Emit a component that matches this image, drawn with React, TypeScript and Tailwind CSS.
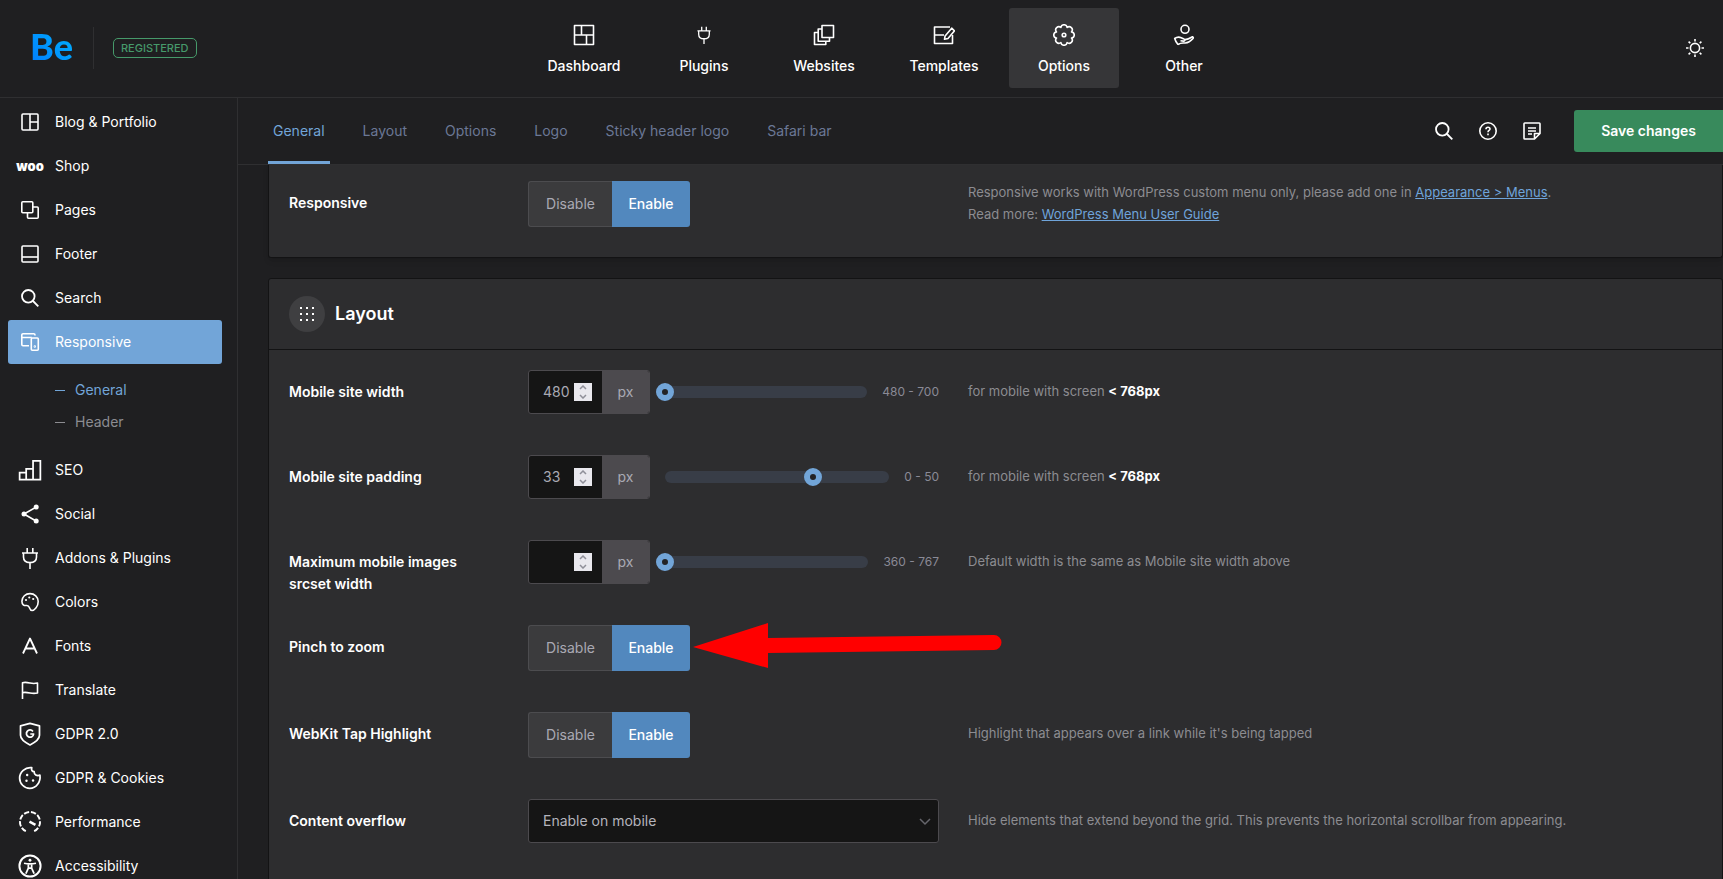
import { useState, type ReactNode } from 'react';

function Icon({ size = 22, children }: { size?: number; children: ReactNode }) {
  return (
    <svg
      width={size}
      height={size}
      viewBox="0 0 22 22"
      fill="none"
      stroke="currentColor"
      strokeWidth="1.6"
      strokeLinejoin="round"
      aria-hidden="true"
    >
      {children}
    </svg>
  );
}

const PlugPaths = () => (
  <>
    <path d="M8.2 1v5M13.8 1v5M3 6h16" />
    <path d="M4.5 6v4c0 3.6 2.6 5.6 6.5 5.6s6.5-2 6.5-5.6V6M11 15.6V22" />
  </>
);

const icons = {
  blog: (
    <Icon>
      <rect x="3" y="3" width="16" height="16" rx="1" />
      <path d="M11 3v16M11 11h8" />
    </Icon>
  ),
  pages: (
    <Icon>
      <rect x="2.8" y="2.8" width="11" height="11" rx="1" />
      <path d="M14 8h4.2a1 1 0 0 1 1 1v9.2a1 1 0 0 1-1 1H9.5a1 1 0 0 1-1-1V14" />
    </Icon>
  ),
  footer: (
    <Icon>
      <rect x="3" y="3" width="16" height="16" rx="1" />
      <path d="M3 14h16" />
    </Icon>
  ),
  search: (
    <Icon>
      <circle cx="9.3" cy="9.3" r="6.3" strokeWidth="1.8" />
      <path d="m14 14 5.3 5.3" strokeWidth="1.8" />
    </Icon>
  ),
  responsive: (
    <Icon>
      <path d="M16 4.5V4a1.2 1.2 0 0 0-1.2-1.2H4A1.2 1.2 0 0 0 2.8 4v9.5c0 .7.5 1.2 1.2 1.2h6M2.8 6.5h10" />
      <rect x="12.3" y="7" width="7" height="12.3" rx="1" />
      <circle cx="15.8" cy="15.5" r=".4" />
    </Icon>
  ),
  seo: (
    <Icon size={24}>
      <path
        d="M1.5 13.5h6v6.3h-6zM7.5 10h6.3v9.800H7.500zM13.800 2.600h6.700v17.200h-6.700z"
        strokeLinejoin="miter"
      />
    </Icon>
  ),
  social: (
    <Icon>
      <path d="M17 4.2 5 11l12 7" />
      <g fill="currentColor" stroke="none">
        <circle cx="5" cy="11" r="2.5" />
        <circle cx="17.2" cy="4" r="2.5" />
        <circle cx="17.2" cy="18" r="2.5" />
      </g>
    </Icon>
  ),
  plug: (
    <Icon>
      <PlugPaths />
    </Icon>
  ),
  colors: (
    <Icon>
      <path d="M2.9 10.2C3 5.8 6.6 2.6 11 2.6s8.2 3.3 8.2 8c0 2.6-.8 4.6-2.1 6.1-1.2 1.5-2.6 2.8-4 2.8-1.7 0-2.1-1.3-2.6-2.7-.5-1.3-1-2.3-2.6-2.3-1.2 0-2.5.3-3.6-.7-1-.9-1.4-2.2-1.4-3.6z" />
      <g fill="currentColor" stroke="none">
        <circle cx="7" cy="9" r="1.1" />
        <circle cx="10.3" cy="6.5" r="1.1" />
        <circle cx="14.2" cy="8" r="1.1" />
      </g>
    </Icon>
  ),
  fonts: (
    <Icon>
      <path d="m4 18.5 7-15 7 15M6.5 13.5h9" strokeWidth="1.8" />
    </Icon>
  ),
  flag: (
    <Icon>
      <path d="M3.5 20V3.8c2.5-1 4.500-.5 7.500.2s5 .6 7.500 0v10c-2.500.6-4.500.6-7.500 0s-5-1-7.500-.3" />
    </Icon>
  ),
  shield: (
    <Icon size={24}>
      <path d="M2.3 3.600 11 1.200l8.700 2.400v8.600c0 4-4.200 6.600-8.700 8.800-4.500-2.200-8.700-4.800-8.700-8.800z" />
      <path d="M13.700 8.700A3.300 3.300 0 1 0 14.300 11h-3" />
    </Icon>
  ),
  cookie: (
    <Icon size={24}>
      <path d="M12.6 1.5c-.6 2.1.3 3.5 2.2 3.7-.2 2.6 2.4 4.2 5.3 3.2.9 6.2-3.3 12.1-9.3 12.1A9.5 9.5 0 0 1 1.500 11c0-5.400 5-10.300 11.100-9.500z" />
      <g fill="currentColor" stroke="none">
        <circle cx="8.400" cy="8.300" r="1.1" />
        <circle cx="7.800" cy="13.500" r="1.1" />
        <circle cx="13.800" cy="13.300" r="1.1" />
      </g>
    </Icon>
  ),
  performance: (
    <Icon size={24}>
      <path d="M7.2 19.4a9.2 9.2 0 1 1 7.6 0" strokeDasharray="4.800 1.600" strokeWidth="1.8" />
      <path d="m10.500 10.700 5.500 3" strokeWidth="2.3" />
    </Icon>
  ),
  accessibility: (
    <Icon size={24}>
      <circle cx="11" cy="11" r="9.700" strokeWidth="1.8" />
      <circle cx="11" cy="5.700" r="1.300" fill="currentColor" stroke="none" />
      <path d="M5.500 8.500c3.500.8 7.500.8 11 0M9.500 9v4l-2.300 5M12.500 9v4l2.300 5M9.500 13h3" />
    </Icon>
  ),
  dashboard: (
    <Icon>
      <path d="M1.500 1.500h19v19h-19zM1.500 11h19M8.500 1.500V11M13.500 11v9.500" />
    </Icon>
  ),
  websites: (
    <Icon>
      <path d="M9 1.500h11.500v12H9z" />
      <path d="M9 5H5.200v12.200h11.300v-3.700M5.200 8.500H1.500v12h11.300v-3.300" />
    </Icon>
  ),
  templates: (
    <Icon>
      <path d="M17 3H1.500v16.500H19.500V11M1.500 11H11" />
      <path d="m18.700 4.200 2.800 2.600-6.500 7.700-3.500.8.6-3.400z" />
    </Icon>
  ),
  gear: (
    <Icon>
      <path d="M18.500 7.900a3.120 3.120 0 0 1 0 6.200a3.120 3.120 0 0 1-4.400 4.400a3.120 3.120 0 0 1-6.200 0a3.120 3.120 0 0 1-4.400-4.400a3.120 3.120 0 0 1 0-6.200a3.120 3.120 0 0 1 4.400-4.400a3.120 3.120 0 0 1 6.200 0a3.120 3.120 0 0 1 4.400 4.400z" />
      <circle cx="11" cy="11" r="1.800" />
    </Icon>
  ),
  other: (
    <Icon>
      <circle cx="12" cy="5.300" r="4" />
      <path d="M5 20.500c-1.500-2-2.800-3.800-3.300-6 2-1.500 4.300-1.800 6.500-.8l2.800 1.200c1.500.6 1.200 2.300-.5 2.200l-3-.3M12 15.500c2.500 0 4.800-1.200 7.500-2.800 1 .5 1 1.300.3 2-2.300 2.600-4.300 4-7.500 4.300-2.300.2-4.500-.5-7.300 1.500" />
    </Icon>
  ),
};

const topNav = [
  { label: 'Dashboard', icon: icons.dashboard },
  {
    label: 'Plugins',
    icon: (
      <Icon size={18}>
        <PlugPaths />
      </Icon>
    ),
  },
  { label: 'Websites', icon: icons.websites },
  { label: 'Templates', icon: icons.templates },
  { label: 'Options', icon: icons.gear },
  { label: 'Other', icon: icons.other },
];

const sideNav = [
  { label: 'Blog & Portfolio', icon: icons.blog },
  { label: 'Shop', icon: <span className="text-[13px] leading-[18px] font-black">woo</span> },
  { label: 'Pages', icon: icons.pages },
  { label: 'Footer', icon: icons.footer },
  { label: 'Search', icon: icons.search },
  { label: 'Responsive', icon: icons.responsive, children: ['General', 'Header'] },
  { label: 'SEO', icon: icons.seo },
  { label: 'Social', icon: icons.social },
  { label: 'Addons & Plugins', icon: icons.plug },
  { label: 'Colors', icon: icons.colors },
  { label: 'Fonts', icon: icons.fonts },
  { label: 'Translate', icon: icons.flag },
  { label: 'GDPR 2.0', icon: icons.shield },
  { label: 'GDPR & Cookies', icon: icons.cookie },
  { label: 'Performance', icon: icons.performance },
  { label: 'Accessibility', icon: icons.accessibility },
];

const tabs = ['General', 'Layout', 'Options', 'Logo', 'Sticky header logo', 'Safari bar'];

function Header() {
  return (
    <header className="flex h-[98px] shrink-0 items-center border-b border-[#2f2f31] pb-px">
      <div className="flex w-[237px] items-center pl-[30px]">
        <a
          href="#"
          className="bg-linear-to-tr from-[#0077ff] to-[#08b4fb] bg-clip-text pb-1 font-['Lato'] text-[36px] leading-[42px] font-black text-transparent"
        >
          Be
        </a>
        <span className="ml-5 h-[42px] w-px bg-[#2f2f31]" />
        <span className="ml-[19px] rounded-[5px] border border-[#46996a] px-[7px] text-[11px] leading-[18px] font-medium text-[#46996a]">
          REGISTERED
        </span>
      </div>
      <nav className="flex flex-1 justify-center gap-[10px]">
        {topNav.map((item) => (
          <a
            key={item.label}
            href="#"
            className={`flex h-20 w-[110px] flex-col items-center rounded-[3px] pt-4 text-sm font-medium text-white ${
              item.label === 'Options' ? 'bg-[#363638]' : ''
            }`}
          >
            <span className="flex h-[22px] items-center">{item.icon}</span>
            <span className="mt-[9px] leading-[22px]">{item.label}</span>
          </a>
        ))}
      </nav>
      <div className="flex w-[192px] justify-end pr-[17px]">
        <button type="button" aria-label="Toggle theme" className="text-white">
          <Icon>
            <circle cx="11" cy="11" r="4.600" />
            <path d="M11 2v2.500M11 17.500V20M2 11h2.500M17.500 11H20M4.600 4.600l1.700 1.700M15.700 15.700l1.700 1.700M4.600 17.400l1.700-1.700M15.700 6.300l1.700-1.700" />
          </Icon>
        </button>
      </div>
    </header>
  );
}

function Sidebar() {
  return (
    <nav className="w-[238px] shrink-0 overflow-hidden border-r border-[#2f2f31] pt-[2px] pr-[15px] pl-2">
      {sideNav.map((item) => (
        <div key={item.label}>
          <a
            href="#"
            className={`flex h-11 items-center rounded-[3px] text-sm text-white ${
              item.children ? 'bg-[#72a5d8]' : ''
            }`}
          >
            <span className="flex w-11 shrink-0 justify-center">{item.icon}</span>
            <span className="ml-[3px]">{item.label}</span>
          </a>
          {item.children && (
            <ul className="py-[10px] pl-[47px]">
              {item.children.map((child) => (
                <li key={child}>
                  <a
                    href="#"
                    className={`flex h-8 items-center gap-[10px] text-sm ${
                      child === 'General' ? 'text-[#72a5d8]' : 'text-[#8c8c91]'
                    }`}
                  >
                    <span className="h-px w-[10px] bg-current" />
                    {child}
                  </a>
                </li>
              ))}
            </ul>
          )}
        </div>
      ))}
    </nav>
  );
}

function TabBar() {
  return (
    <div className="flex h-[67px] shrink-0 items-center border-b border-[#2f2f31] pl-[30px]">
      <nav className="flex h-full flex-1 gap-[28px]">
        {tabs.map((tab) => (
          <a
            key={tab}
            href="#"
            className={`flex items-center border-b-3 px-[5px] pt-[3px] text-sm ${
              tab === 'General'
                ? 'border-[#72a5d8] text-[#72a5d8]'
                : 'border-transparent text-[#6b7896]'
            }`}
          >
            {tab}
          </a>
        ))}
      </nav>
      <div className="mr-[31px] flex gap-[22px] text-white">
        <button type="button" aria-label="Search">
          {icons.search}
        </button>
        <button type="button" aria-label="Help">
          <Icon>
            <circle cx="11" cy="11" r="8.200" />
            <path d="M9 9.200c0-1.300.9-2 2-2s2 .7 2 1.800c0 1.500-2 1.500-2 3.200M11 13.600v1.600" />
          </Icon>
        </button>
        <button type="button" aria-label="Notes">
          <Icon>
            <path d="M19 13.500V3.800a.8.8 0 0 0-.8-.8H3.800a.8.8 0 0 0-.8.8v14.400c0 .4.400.8.800.8h9.700zM13.500 19v-5.500H19" />
            <path d="M7 8h8M7 11h8M7 14h4" />
          </Icon>
        </button>
      </div>
      <button
        type="button"
        className="h-[42px] w-[149px] rounded-l-[3px] bg-[#388a5c] text-sm font-semibold text-white"
      >
        Save changes
      </button>
    </div>
  );
}

function Row({
  label,
  htmlFor,
  help,
  children,
}: {
  label: string;
  htmlFor: string;
  help?: ReactNode;
  children: ReactNode;
}) {
  return (
    <div className="grid grid-cols-[239px_minmax(0,411px)_minmax(0,1fr)] pt-5 pb-[10px] pl-5">
      <label
        id={`${htmlFor}-label`}
        htmlFor={htmlFor}
        className="max-w-[200px] pt-[11px] text-sm leading-[22px] font-semibold text-white"
      >
        {label}
      </label>
      <div className="relative pb-[11px]">{children}</div>
      <div className="pt-[10px] pl-[29px] text-[13px] leading-[22px] text-[#8c8c91]">{help}</div>
    </div>
  );
}

function Toggle({ id }: { id: string }) {
  const [enabled, setEnabled] = useState(true);

  return (
    <div
      role="group"
      aria-labelledby={`${id}-label`}
      className="inline-flex h-[46px] align-top text-sm"
    >
      <button
        type="button"
        aria-pressed={!enabled}
        onClick={() => setEnabled(false)}
        className={`w-[84px] rounded-l-[3px] ${
          enabled
            ? 'border border-r-0 border-[#4c4c4f] bg-[#3b3b3d] text-[#a9a9b3]'
            : 'bg-[#5288be] font-medium text-white'
        }`}
      >
        Disable
      </button>
      <button
        id={id}
        type="button"
        aria-pressed={enabled}
        onClick={() => setEnabled(true)}
        className={`w-[78px] rounded-r-[3px] ${
          enabled
            ? 'bg-[#5288be] font-medium text-white'
            : 'border border-l-0 border-[#4c4c4f] bg-[#3b3b3d] text-[#a9a9b3]'
        }`}
      >
        Enable
      </button>
    </div>
  );
}

function SliderField({
  id,
  label,
  initial,
  min,
  max,
}: {
  id: string;
  label: string;
  initial: string;
  min: number;
  max: number;
}) {
  const [value, setValue] = useState(initial);
  const step = (by: number) =>
    setValue(String(Math.min(max, Math.max(min, Number(value || min) + by))));

  return (
    <div className="flex h-11 items-center">
      <div className="flex h-11 w-[122px] shrink-0 overflow-hidden rounded-[3px] border border-[#4c4a4e] bg-[#151515]">
        <input
          id={id}
          type="number"
          value={value}
          onChange={(e) => setValue(e.target.value)}
          className="w-[45px] appearance-none pl-[14px] text-sm text-[#a9a9b3] outline-none [appearance:textfield] [&::-webkit-inner-spin-button]:m-0 [&::-webkit-inner-spin-button]:appearance-none"
        />
        <div className="flex h-[18px] w-[18px] flex-col self-center bg-[#e9e8ee] text-[#8f8f99]">
          <button
            type="button"
            aria-label={`Increase ${label}`}
            onClick={() => step(1)}
            className="flex h-[9px] items-center justify-center"
          >
            <svg width="8" height="5" viewBox="0 0 8 5" fill="none" stroke="currentColor" strokeWidth="1.5">
              <path d="m1 4 3-3 3 3" />
            </svg>
          </button>
          <button
            type="button"
            aria-label={`Decrease ${label}`}
            onClick={() => step(-1)}
            className="flex h-[9px] items-center justify-center"
          >
            <svg width="8" height="5" viewBox="0 0 8 5" fill="none" stroke="currentColor" strokeWidth="1.5">
              <path d="m1 1 3 3 3-3" />
            </svg>
          </button>
        </div>
        <span className="ml-[10px] flex flex-1 items-center justify-center bg-[#4c4a4e] text-sm text-[#a9a9b3]">
          px
        </span>
      </div>
      <div className="ml-[15px] h-3 min-w-0 flex-1 rounded-full bg-[#383d47]">
        <input
          type="range"
          aria-label={label}
          min={min}
          max={max}
          value={value || min}
          onChange={(e) => setValue(e.target.value)}
          className="-mx-[9px] -my-[3px] block h-[18px] w-[calc(100%+18px)] appearance-none bg-transparent [&::-webkit-slider-thumb]:size-[18px] [&::-webkit-slider-thumb]:appearance-none [&::-webkit-slider-thumb]:rounded-full [&::-webkit-slider-thumb]:border-6 [&::-webkit-slider-thumb]:border-[#72a5d8] [&::-webkit-slider-thumb]:bg-[#232325]"
        />
      </div>
      <span className="ml-[15px] text-xs text-[#8a8a96]">
        {min} - {max}
      </span>
    </div>
  );
}

// Red pointer laid over the row next to the toggle
function Pointer() {
  return (
    <svg
      className="pointer-events-none absolute -top-0.5 left-[165px]"
      width="310"
      height="46"
      viewBox="0 0 310 46"
      fill="#ff0000"
    >
      <path d="M0 24 75 0v15l226-3a7.500 7.500 0 0 1 0 15L75 30v15z" />
    </svg>
  );
}

export default function App() {
  const screenHelp = (
    <>
      for mobile with screen <strong className="font-bold text-white">&lt; 768px</strong>
    </>
  );

  return (
    <div className="flex h-screen flex-col overflow-hidden bg-[#1f1f21] font-['Inter',sans-serif]">
      <Header />
      <div className="flex min-h-0 flex-1">
        <Sidebar />
        <div className="flex min-w-0 flex-1 flex-col">
          <TabBar />
          <main className="flex-1 overflow-hidden pl-[30px]">
            {/* End of the first card, the page is scrolled past its title */}
            <section className="-mt-1 rounded-b-[3px] border border-t-0 border-[#131314] bg-[#2d2d2f] pb-[9px] shadow-md">
              <Row
                label="Responsive"
                htmlFor="responsive"
                help={
                  <div className="-mt-[10px]">
                    Responsive works with WordPress custom menu only, please add one in{' '}
                    <a href="#" className="text-[#6fa4da] underline">
                      Appearance &gt; Menus
                    </a>
                    .
                    <br />
                    Read more:{' '}
                    <a href="#" className="text-[#6fa4da] underline">
                      WordPress Menu User Guide
                    </a>
                  </div>
                }
              >
                <Toggle id="responsive" />
              </Row>
            </section>

            <section className="mt-5 rounded-[3px] border border-[#131314] bg-[#2d2d2f] pb-10">
              <div className="flex h-[71px] items-center gap-[10px] border-b border-[#131314] pl-5">
                <span className="flex size-9 items-center justify-center rounded-full bg-[#3f3f41]">
                  <svg width="14" height="14" viewBox="0 0 14 14" fill="#fff">
                    <path d="M0 0h2v2H0zM6 0h2v2H6zM12 0h2v2h-2zM0 6h2v2H0zM6 6h2v2H6zM12 6h2v2h-2zM0 12h2v2H0zM6 12h2v2H6zM12 12h2v2h-2z" />
                  </svg>
                </span>
                <h2 className="text-lg font-semibold text-white">Layout</h2>
              </div>
              <Row label="Mobile site width" htmlFor="site-width" help={screenHelp}>
                <SliderField id="site-width" label="Mobile site width" initial="480" min={480} max={700} />
              </Row>
              <Row label="Mobile site padding" htmlFor="site-padding" help={screenHelp}>
                <SliderField id="site-padding" label="Mobile site padding" initial="33" min={0} max={50} />
              </Row>
              <Row
                label="Maximum mobile images srcset width"
                htmlFor="srcset-width"
                help="Default width is the same as Mobile site width above"
              >
                <SliderField id="srcset-width" label="Maximum srcset width" initial="" min={360} max={767} />
              </Row>
              <Row label="Pinch to zoom" htmlFor="pinch">
                <Toggle id="pinch" />
                <Pointer />
              </Row>
              <Row
                label="WebKit Tap Highlight"
                htmlFor="tap-highlight"
                help="Highlight that appears over a link while it's being tapped"
              >
                <Toggle id="tap-highlight" />
              </Row>
              <Row
                label="Content overflow"
                htmlFor="overflow"
                help="Hide elements that extend beyond the grid. This prevents the horizontal scrollbar from appearing."
              >
                <select
                  id="overflow"
                  className="block h-11 w-full appearance-none rounded-[3px] border border-[#4c4a4e] bg-[#151515] pl-[14px] text-sm text-[#b4b4bc]"
                >
                  <option>Enable on mobile</option>
                  <option>Disable</option>
                </select>
                <svg
                  className="pointer-events-none absolute top-[19px] right-2"
                  width="12"
                  height="8"
                  viewBox="0 0 12 8"
                  fill="none"
                  stroke="#66666c"
                  strokeWidth="1.5"
                >
                  <path d="m1 1 5 5 5-5" />
                </svg>
              </Row>
            </section>
          </main>
        </div>
      </div>
    </div>
  );
}
